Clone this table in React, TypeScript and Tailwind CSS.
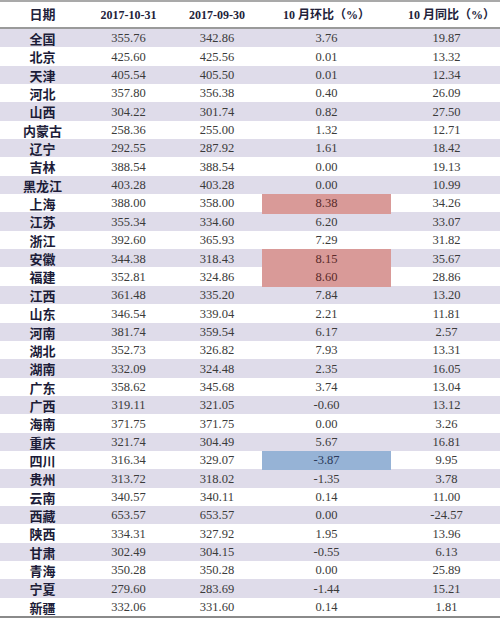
const rows: [string, string, string, string, string, string?][] = [
  ["全国", "355.76", "342.86", "3.76", "19.87"],
  ["北京", "425.60", "425.56", "0.01", "13.32"],
  ["天津", "405.54", "405.50", "0.01", "12.34"],
  ["河北", "357.80", "356.38", "0.40", "26.09"],
  ["山西", "304.22", "301.74", "0.82", "27.50"],
  ["内蒙古", "258.36", "255.00", "1.32", "12.71"],
  ["辽宁", "292.55", "287.92", "1.61", "18.42"],
  ["吉林", "388.54", "388.54", "0.00", "19.13"],
  ["黑龙江", "403.28", "403.28", "0.00", "10.99"],
  ["上海", "388.00", "358.00", "8.38", "34.26", "red"],
  ["江苏", "355.34", "334.60", "6.20", "33.07"],
  ["浙江", "392.60", "365.93", "7.29", "31.82"],
  ["安徽", "344.38", "318.43", "8.15", "35.67", "red"],
  ["福建", "352.81", "324.86", "8.60", "28.86", "red"],
  ["江西", "361.48", "335.20", "7.84", "13.20"],
  ["山东", "346.54", "339.04", "2.21", "11.81"],
  ["河南", "381.74", "359.54", "6.17", "2.57"],
  ["湖北", "352.73", "326.82", "7.93", "13.31"],
  ["湖南", "332.09", "324.48", "2.35", "16.05"],
  ["广东", "358.62", "345.68", "3.74", "13.04"],
  ["广西", "319.11", "321.05", "-0.60", "13.12"],
  ["海南", "371.75", "371.75", "0.00", "3.26"],
  ["重庆", "321.74", "304.49", "5.67", "16.81"],
  ["四川", "316.34", "329.07", "-3.87", "9.95", "blue"],
  ["贵州", "313.72", "318.02", "-1.35", "3.78"],
  ["云南", "340.57", "340.11", "0.14", "11.00"],
  ["西藏", "653.57", "653.57", "0.00", "-24.57"],
  ["陕西", "334.31", "327.92", "1.95", "13.96"],
  ["甘肃", "302.49", "304.15", "-0.55", "6.13"],
  ["青海", "350.28", "350.28", "0.00", "25.89"],
  ["宁夏", "279.60", "283.69", "-1.44", "15.21"],
  ["新疆", "332.06", "331.60", "0.14", "1.81"],
];

const cols = "grid grid-cols-[85px_87px_90px_129px_1fr]";

export default function App() {
  return (
    <div className="w-[500px] h-[620px] bg-white overflow-hidden font-['Liberation_Serif','Noto_Sans_CJK_SC',serif]">
      <div className="border-t-2 border-[#a9a9a9]">
        <div className={`${cols} h-[27px] items-center border-b-2 border-[#9a9a9a] text-[12px] font-bold text-[#22223a]`}>
          <div className="text-center text-[13px]">日期</div>
          <div className="text-center">2017-10-31</div>
          <div className="text-center">2017-09-30</div>
          <div className="text-center">10 月环比（%）</div>
          <div className="text-center pl-[12px]">10 月同比（%）</div>
        </div>
        <div className="border-b-2 border-[#8a8a8a]">
          {rows.map(([name, a, b, c, d, hl], i) => (
            <div
              key={name}
              className={`${cols} h-[18.35px] items-stretch text-[12.5px] text-[#3a3a3a] ${i % 2 === 0 ? "bg-[#dfdcea]" : "bg-white"}`}
            >
              <div className="flex items-center justify-center text-[13px] font-bold text-[#1c1c38] font-['Noto_Sans_CJK_SC',sans-serif]">
                {name}
              </div>
              <div className="flex items-center justify-center">{a}</div>
              <div className="flex items-center justify-center">{b}</div>
              <div
                className={`flex items-center justify-center ${
                  hl === "red" ? "bg-[#d99a98] text-[#5a2a2a]" : hl === "blue" ? "bg-[#96b3d6] text-[#2a3a5a]" : ""
                }`}
              >
                {c}
              </div>
              <div className="flex items-center justify-center pl-[2px]">{d}</div>
            </div>
          ))}
        </div>
      </div>
    </div>
  );
}
